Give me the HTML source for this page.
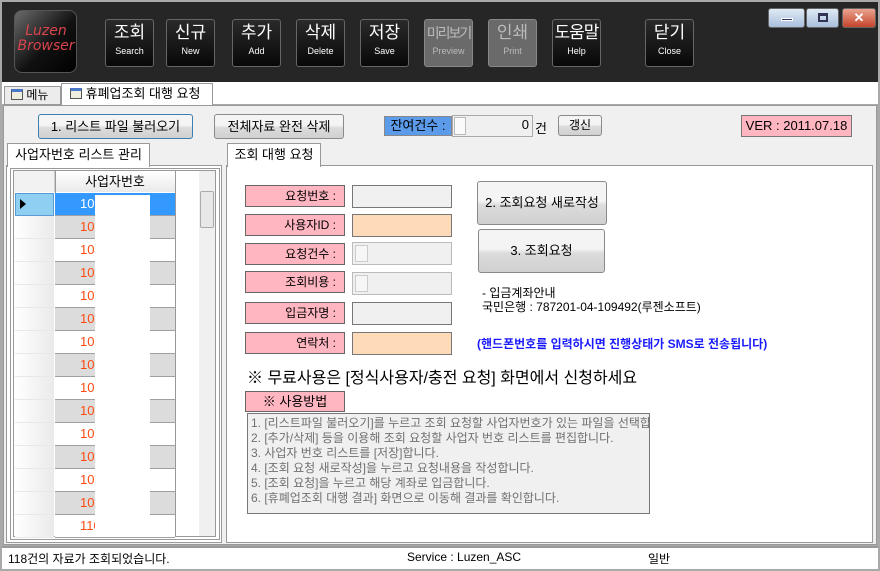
<!DOCTYPE html>
<html><head><meta charset="utf-8"><style>
*{box-sizing:border-box;margin:0;padding:0}
body{width:880px;height:571px;overflow:hidden;background:#a9a9a9;font-family:"Liberation Sans","Noto Sans CJK KR",sans-serif;font-size:12px;color:#000;position:relative}
.a{position:absolute}
.tb{background:#262626;left:2px;top:2px;width:876px;height:80px}
.btn{position:absolute;top:19px;width:49px;height:48px;border:1px solid #666;border-radius:3px;background:linear-gradient(#2a2a2a,#080808);color:#fff;text-align:center;white-space:nowrap;overflow:hidden}
.btn b{display:block;font-weight:normal;font-size:17px;margin-top:3px;line-height:20px}
.btn i{display:block;font-style:normal;font-size:9px;margin-top:3px}
.btn.g{background:#6a6a6a;border-color:#888;color:#bbb}
.wb{position:absolute;top:8px;height:20px;border:1px solid #666;border-radius:3px;background:linear-gradient(#dfe9f5,#a9c0dc)}
.lab{position:absolute;left:245px;width:100px;height:22px;background:#ffb6c1;border:1px solid #666;text-align:right;padding-right:8px;line-height:20px;font-size:12px}
.inp{position:absolute;left:352px;width:100px;height:23px;border:1px solid #777;background:#f0f0f0}
.pbtn{position:absolute;border:1px solid #8a8a8a;border-radius:3px;background:linear-gradient(#f4f4f4 45%,#dcdcdc 55%,#d0d0d0);text-align:center}
.row{position:absolute;left:55px;width:120px;height:23px;border-bottom:1px solid #a0a0a0;color:#ff4a10;font-size:13px;padding-left:25px;line-height:22px}
.rh{position:absolute;left:15px;width:39px;height:23px;border-bottom:1px solid #e8e8e8;background:linear-gradient(90deg,#fff,#eaeaea)}
</style></head><body>
<div class="a tb"></div>
<div class="a" style="left:14px;top:10px;width:63px;height:63px;border-radius:8px;background:linear-gradient(135deg,#6a6a6a,#111 55%,#000);border:1px solid #555"></div>
<div class="a" style="left:16px;top:24px;width:60px;text-align:center;color:#d9444c;font-style:italic;font-size:14px;line-height:15px;font-family:'DejaVu Sans',sans-serif">Luzen<br>Browser</div>
<div class="btn" style="left:105px"><b>조회</b><i>Search</i></div>
<div class="btn" style="left:166px"><b>신규</b><i>New</i></div>
<div class="btn" style="left:232px"><b>추가</b><i>Add</i></div>
<div class="btn" style="left:296px"><b>삭제</b><i>Delete</i></div>
<div class="btn" style="left:360px"><b>저장</b><i>Save</i></div>
<div class="btn g" style="left:424px"><b style="font-size:14px;letter-spacing:-2px">미리보기</b><i>Preview</i></div>
<div class="btn g" style="left:488px"><b>인쇄</b><i>Print</i></div>
<div class="btn" style="left:552px"><b style="letter-spacing:-1px">도움말</b><i>Help</i></div>
<div class="btn" style="left:645px"><b>닫기</b><i>Close</i></div>
<div class="wb" style="left:768px;width:37px"><div class="a" style="left:12px;top:9px;width:12px;height:3px;background:#335;border:1px solid #fff"></div></div>
<div class="wb" style="left:806px;width:33px"><div class="a" style="left:11px;top:4px;width:10px;height:9px;border:2px solid #335;border-top-width:3px"></div></div>
<div class="wb" style="left:842px;width:34px;background:linear-gradient(#eaa490,#c4442b);color:#fff;text-align:center;font-weight:bold;font-size:13px;line-height:18px">✕</div>
<div class="a" style="left:2px;top:82px;width:876px;height:22px;background:#fff"></div>
<div class="a" style="left:4px;top:86px;width:57px;height:19px;background:#ececec;border:1px solid #999;padding-left:6px;line-height:17px"><span style="display:inline-block;width:12px;height:11px;border:1px solid #555;border-top:3px solid #4a78c8;background:#eeeede;vertical-align:-1px"></span> 메뉴</div>
<div class="a" style="left:61px;top:83px;width:152px;height:23px;background:#fff;border:1px solid #999;border-bottom:none;padding-left:8px;line-height:20px;font-size:13px"><span style="display:inline-block;width:12px;height:11px;border:1px solid #555;border-top:3px solid #4a78c8;background:#eeeede;vertical-align:-1px"></span> 휴폐업조회 대행 요청</div>
<div class="a" style="left:3px;top:105px;width:874px;height:440px;background:#f0f0f0;border:1px solid #999"></div>
<div class="pbtn" style="left:38px;top:114px;width:155px;height:25px;line-height:23px;border-color:#3c7fb1;font-size:13px">1. 리스트 파일 불러오기</div>
<div class="pbtn" style="left:214px;top:114px;width:130px;height:25px;line-height:23px;font-size:13px">전체자료 완전 삭제</div>
<div class="a" style="left:384px;top:116px;width:68px;height:20px;background:#5b9bea;border:1px solid #888;line-height:18px;text-align:center;font-size:13px">잔여건수 :</div>
<div class="a" style="left:452px;top:115px;width:81px;height:22px;background:#f0f0f0;border:1px solid #aaa;text-align:right;padding-right:3px;line-height:18px;font-size:13px">0</div>
<div class="a" style="left:454px;top:117px;width:12px;height:18px;border:1px solid #bbb;background:#fafafa"></div>
<div class="a" style="left:535px;top:118px;font-size:13px">건</div>
<div class="pbtn" style="left:558px;top:115px;width:44px;height:21px;line-height:19px">갱신</div>
<div class="a" style="left:741px;top:115px;width:111px;height:22px;background:#ffb6c1;border:1px solid #777;text-align:center;line-height:20px;font-size:13px">VER : 2011.07.18</div>

<div class="a" style="left:6px;top:165px;width:216px;height:378px;border:1px solid #999;background:#fff"></div>
<div class="a" style="left:7px;top:143px;width:143px;height:24px;border:1px solid #999;border-bottom:none;background:#fff;line-height:22px;text-align:center;font-size:13px">사업자번호 리스트 관리</div>
<div class="a" style="left:10px;top:168px;width:210px;height:372px;border:1px solid #999;background:#fff"></div>
<div class="a" style="left:13px;top:170px;width:203px;height:367px;border:1px solid #999;background:#fff;overflow:hidden">
<div class="a" style="left:0;top:0;width:41px;height:21px;background:#f2f2f2;border-right:1px solid #ccc"></div>
<div class="a" style="left:41px;top:0;width:120px;height:21px;background:linear-gradient(#fff,#eaeaea);text-align:center;line-height:22px;font-size:13px">사업자번호</div>
<div class="a" style="left:41px;top:0;width:1px;height:367px;background:#999"></div>
<div class="a" style="left:161px;top:0;width:1px;height:367px;background:#999"></div>
<div class="a" style="left:185px;top:0;width:17px;height:367px;background:#f0f0f0"></div>
<div class="a" style="left:186px;top:20px;width:14px;height:37px;border:1px solid #aaa;border-radius:2px;background:#e8e8e8"></div>
</div>
<div style="position:absolute;left:0;top:0">
<div class="rh" style="top:193px;background:#8fd0f2;border:1px solid #5b9bd5"></div><div class="a" style="left:20px;top:199px;border-left:6px solid #000;border-top:5px solid transparent;border-bottom:5px solid transparent"></div>
<div class="row" style="top:193px;background:#3399ff;color:#fff">101</div>
<div class="rh" style="top:216px"></div><div class="row" style="top:216px;background:#dcdcdc">102</div>
<div class="rh" style="top:239px"></div><div class="row" style="top:239px;background:#fff">104</div>
<div class="rh" style="top:262px"></div><div class="row" style="top:262px;background:#dcdcdc">106</div>
<div class="rh" style="top:285px"></div><div class="row" style="top:285px;background:#fff">106</div>
<div class="rh" style="top:308px"></div><div class="row" style="top:308px;background:#dcdcdc">106</div>
<div class="rh" style="top:331px"></div><div class="row" style="top:331px;background:#fff">106</div>
<div class="rh" style="top:354px"></div><div class="row" style="top:354px;background:#dcdcdc">107</div>
<div class="rh" style="top:377px"></div><div class="row" style="top:377px;background:#fff">107</div>
<div class="rh" style="top:400px"></div><div class="row" style="top:400px;background:#dcdcdc">107</div>
<div class="rh" style="top:423px"></div><div class="row" style="top:423px;background:#fff">108</div>
<div class="rh" style="top:446px"></div><div class="row" style="top:446px;background:#dcdcdc">108</div>
<div class="rh" style="top:469px"></div><div class="row" style="top:469px;background:#fff">109</div>
<div class="rh" style="top:492px"></div><div class="row" style="top:492px;background:#dcdcdc">109</div>
<div class="rh" style="top:515px"></div><div class="row" style="top:515px;background:#fff">110</div>
</div>
<div class="a" style="left:95px;top:195px;width:55px;height:341px;background:#fff"></div>

<div class="a" style="left:226px;top:165px;width:647px;height:378px;border:1px solid #999;background:#fff"></div>
<div class="a" style="left:227px;top:143px;width:94px;height:24px;border:1px solid #999;border-bottom:none;background:#fff;line-height:22px;text-align:center;font-size:13px">조회 대행 요청</div>
<div class="lab" style="top:185px">요청번호 :</div><div class="inp" style="top:185px"></div>
<div class="lab" style="top:214px">사용자ID :</div><div class="inp" style="top:214px;background:#ffdab9"></div>
<div class="lab" style="top:243px">요청건수 :</div><div class="inp" style="top:242px;border-color:#bbb"><div class="a" style="left:2px;top:2px;width:13px;height:17px;border:1px solid #ccc;background:#f6f6f6"></div></div>
<div class="lab" style="top:271px">조회비용 :</div><div class="inp" style="top:272px;border-color:#bbb"><div class="a" style="left:2px;top:2px;width:13px;height:17px;border:1px solid #ccc;background:#f6f6f6"></div></div>
<div class="lab" style="top:302px">입금자명 :</div><div class="inp" style="top:302px"></div>
<div class="lab" style="top:332px">연락처 :</div><div class="inp" style="top:332px;background:#ffdab9"></div>
<div class="pbtn" style="left:477px;top:181px;width:130px;height:44px;line-height:42px;font-size:13px">2. 조회요청 새로작성</div>
<div class="pbtn" style="left:478px;top:229px;width:127px;height:44px;line-height:42px;font-size:13px">3. 조회요청</div>
<div class="a" style="left:482px;top:286px;font-size:12px;line-height:14px">- 입금계좌안내<br>국민은행 : 787201-04-109492(루젠소프트)</div>
<div class="a" style="left:477px;top:335px;color:#1a1aff;font-weight:bold;font-size:12px">(핸드폰번호를 입력하시면 진행상태가 SMS로 전송됩니다)</div>
<div class="a" style="left:247px;top:364px;font-size:16px">※ 무료사용은 [정식사용자/충전 요청] 화면에서 신청하세요</div>
<div class="a" style="left:245px;top:391px;width:100px;height:21px;background:#ffb6c1;border:1px solid #666;text-align:center;line-height:19px;font-size:13px">※ 사용방법</div>
<div class="a" style="left:247px;top:413px;width:403px;height:101px;border:1px solid #777;background:#f0f0f0;color:#707070;font-size:12px;line-height:15px;padding:2px 0 0 3px;white-space:nowrap;overflow:hidden">1. [리스트파일 불러오기]를 누르고 조회 요청할 사업자번호가 있는 파일을 선택합니다.<br>2. [추가/삭제] 등을 이용해 조회 요청할 사업자 번호 리스트를 편집합니다.<br>3. 사업자 번호 리스트를 [저장]합니다.<br>4. [조회 요청 새로작성]을 누르고 요청내용을 작성합니다.<br>5. [조회 요청]을 누르고 해당 계좌로 입금합니다.<br>6. [휴폐업조회 대행 결과] 화면으로 이동해 결과를 확인합니다.</div>

<div class="a" style="left:2px;top:546px;width:876px;height:23px;background:#fff;border-top:2px solid #999"></div>
<div class="a" style="left:8px;top:550px;font-size:12px">118건의 자료가 조회되었습니다.</div>
<div class="a" style="left:407px;top:550px;font-size:12px">Service : Luzen_ASC</div>
<div class="a" style="left:648px;top:550px;font-size:12px">일반</div>
</body></html>
